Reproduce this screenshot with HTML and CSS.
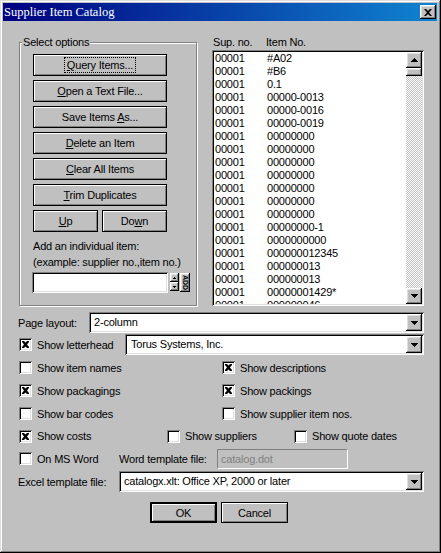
FILE: index.html
```html
<!DOCTYPE html>
<html lang="en">
<head>
    <meta charset="UTF-8" />
    <title>Supplier Item Catalog</title>
    <link rel="stylesheet" href="styles.css">
</head>
<body>

<div class="window">
    <div class="titlebar">
        <span class="title">Supplier Item Catalog</span>
        <button class="close-btn raised">
            <svg width="8" height="7" viewBox="0 0 8 7"><path d="M0 0h2l2 2 2-2h2l-3 3.5 3 3.5h-2l-2-2-2 2h-2l3-3.5z" fill="#000"/></svg>
        </button>
    </div>

    <div class="dialog">
        <div class="top">
            <div class="group">
                <div class="group-label">Select options</div>
                <div class="btn-stack">
                    <button class="btn"><span class="focus"><u>Q</u>uery Items...</span></button>
                    <button class="btn"><u>O</u>pen a Text File...</button>
                    <button class="btn">Save Items <u>A</u>s...</button>
                    <button class="btn"><u>D</u>elete an Item</button>
                    <button class="btn"><u>C</u>lear All Items</button>
                    <button class="btn"><u>T</u>rim Duplicates</button>
                    <div class="btn-pair">
                        <button class="btn"><u>U</u>p</button>
                        <button class="btn">Do<u>w</u>n</button>
                    </div>
                </div>
                <div class="hint">Add an individual item:<br>(example: supplier no.,item no.)</div>
                <div class="add-row">
                    <div class="textbox sunken"></div>
                    <div class="spin">
                        <div class="spin-btn raised"><svg width="3" height="2" viewBox="0 0 3 2"><path d="M1 0h1v1h1v1h-3v-1h1z" fill="#000"/></svg></div>
                        <div class="spin-btn raised"><svg width="3" height="2" viewBox="0 0 3 2"><path d="M0 0h3v1h-1v1h-1v-1h-1z" fill="#000"/></svg></div>
                    </div>
                    <button class="add-btn raised">ADD</button>
                </div>
            </div>

            <div class="list-section">
                <div class="list-head"><span class="c1">Sup. no.</span><span>Item No.</span></div>
                <div class="listbox sunken">
                    <div class="rows" id="rows"></div>
                    <div class="vscroll">
                        <div class="sb-btn raised"><svg width="7" height="4" viewBox="0 0 7 4"><path d="M3 0h1v1h1v1h1v1h1v1h-7v-1h1v-1h1v-1h1z" fill="#000"/></svg></div>
                        <div class="sb-thumb raised"></div>
                        <div class="sb-track"></div>
                        <div class="sb-btn raised"><svg width="7" height="4" viewBox="0 0 7 4"><path d="M0 0h7v1h-1v1h-1v1h-1v1h-1v-1h-1v-1h-1v-1h-1z" fill="#000"/></svg></div>
                    </div>
                </div>
            </div>
        </div>

        <div class="field-row layout-row">
            <span class="label-layout">Page layout:</span>
            <div class="combo sunken">
                <span class="combo-text">2-column</span>
                <div class="combo-btn raised"><svg width="7" height="4" viewBox="0 0 7 4"><path d="M0 0h7v1h-1v1h-1v1h-1v1h-1v-1h-1v-1h-1v-1h-1z" fill="#000"/></svg></div>
            </div>
        </div>

        <div class="field-row letterhead-row">
            <label class="opt opt-letterhead"><span class="check sunken checked"></span>Show letterhead</label>
            <div class="combo sunken">
                <span class="combo-text wide">Torus Systems, Inc.</span>
                <div class="combo-btn raised"><svg width="7" height="4" viewBox="0 0 7 4"><path d="M0 0h7v1h-1v1h-1v1h-1v1h-1v-1h-1v-1h-1v-1h-1z" fill="#000"/></svg></div>
            </div>
        </div>

        <div class="opt-grid">
            <label class="opt"><span class="check sunken"></span>Show item names</label>
            <label class="opt"><span class="check sunken checked"></span>Show descriptions</label>
            <label class="opt"><span class="check sunken checked"></span>Show packagings</label>
            <label class="opt"><span class="check sunken checked"></span>Show packings</label>
            <label class="opt"><span class="check sunken"></span>Show bar codes</label>
            <label class="opt"><span class="check sunken"></span>Show supplier item nos.</label>
        </div>

        <div class="opt-row costs-row">
            <label class="opt"><span class="check sunken checked"></span>Show costs</label>
            <label class="opt"><span class="check sunken"></span>Show suppliers</label>
            <label class="opt"><span class="check sunken"></span>Show quote dates</label>
        </div>

        <div class="opt-row word-row">
            <label class="opt"><span class="check sunken"></span>On MS Word</label>
            <span class="word-label">Word template file:</span>
            <div class="disabled-box">catalog.dot</div>
        </div>

        <div class="field-row excel-row">
            <span class="label-excel">Excel template file:</span>
            <div class="combo sunken">
                <span class="combo-text">catalogx.xlt: Office XP, 2000 or later</span>
                <div class="combo-btn raised"><svg width="7" height="4" viewBox="0 0 7 4"><path d="M0 0h7v1h-1v1h-1v1h-1v1h-1v-1h-1v-1h-1v-1h-1z" fill="#000"/></svg></div>
            </div>
        </div>

        <div class="actions">
            <button class="btn btn-default">OK</button>
            <button class="btn">Cancel</button>
        </div>
    </div>
</div>

<script>
    document.addEventListener("DOMContentLoaded", () => {
        const items = [
            "#A02", "#B6", "0.1", "00000-0013", "00000-0016", "00000-0019",
            "00000000", "00000000", "00000000", "00000000", "00000000", "00000000", "00000000",
            "00000000-1", "0000000000", "000000012345", "000000013", "000000013",
            "00000001429*", "000000046"
        ];
        const rows = document.getElementById("rows");
        items.forEach(item => {
            const row = document.createElement("div");
            row.classList.add("row");
            row.innerHTML = `<span class="c1">00001</span><span>${item}</span>`;
            rows.appendChild(row);
        });

        // tick marks drawn as a small X, like the old dialog
        document.querySelectorAll(".check.checked").forEach(box => {
            box.innerHTML = '<svg width="7" height="7" viewBox="0 0 7 7"><path d="M0 0h2l1.5 1.5 1.5-1.5h2v1l-2 2.5 2 2.5v1h-2l-1.5-1.5-1.5 1.5h-2v-1l2-2.5-2-2.5z" fill="#000"/></svg>';
        });
    });
</script>

</body>
</html>
```

FILE: styles.css
```css
/* General */
* {
    box-sizing: border-box;
}

body {
    margin: 0;
    background: #c0c0c0;
    font-family: 'Liberation Sans', Arial, sans-serif;
    font-size: 11px;
    letter-spacing: -0.2px;
    color: #000;
}

button {
    font-family: inherit;
    font-size: 11px;
    letter-spacing: inherit;
    color: #000;
    padding: 0;
    margin: 0;
}

u {
    text-decoration: underline;
    text-underline-offset: 1px;
}

/* 3D bevels */
.raised {
    background: #c0c0c0;
    border: none;
    box-shadow: inset -1px -1px #000, inset 1px 1px #fff, inset -2px -2px #808080, inset 2px 2px #dfdfdf;
}

.sunken {
    box-shadow: inset 1px 1px #808080, inset -1px -1px #fff, inset 2px 2px #000, inset -2px -2px #dfdfdf;
}

/* Window frame */
.window {
    width: 441px;
    height: 553px;
    padding: 3px 4px 3px 3px;
    background: #c0c0c0;
    box-shadow: inset -1px -1px #000, inset 1px 1px #dfdfdf, inset -2px -2px #808080, inset 2px 2px #fff;
}

.titlebar {
    height: 18px;
    display: flex;
    align-items: center;
    justify-content: space-between;
    padding: 0 1px 0 1px;
    background: linear-gradient(to right, #000080, #1084d0);
    color: #fff;
}

.title {
    font-family: 'Liberation Serif', serif;
    font-size: 12.5px;
    letter-spacing: 0;
    line-height: 18px;
}

.close-btn {
    width: 16px;
    height: 14px;
    display: flex;
    align-items: center;
    justify-content: center;
}

/* Dialog body */
.dialog {
    padding: 15px 13px 0 15px;
}

.top {
    display: flex;
    align-items: flex-start;
    gap: 15px;
}

/* Group box */
.group {
    width: 178px;
    height: 264px;
    margin-top: 6px;
    margin-left: 1px;
    border: 1px solid #808080;
    box-shadow: inset 1px 1px #fff, 1px 1px #fff;
}

.group-label {
    width: fit-content;
    margin: -7px 0 5px 2px;
    padding: 0 1px;
    line-height: 13px;
    background: #c0c0c0;
}

.btn-stack {
    display: flex;
    flex-direction: column;
    gap: 4px;
    padding-left: 13px;
}

.btn {
    width: 134px;
    height: 22px;
    background: #c0c0c0;
    border: 1px solid #000;
    box-shadow: inset 1px 1px #fff, inset -1px -1px #808080;
}

.focus {
    padding: 0 1px;
    outline: 1px dotted #000;
    outline-offset: 1px;
}

.btn-pair {
    display: flex;
    gap: 4px;
}

.btn-pair .btn {
    width: 65px;
}

.hint {
    padding-left: 13px;
    margin-top: 6px;
    line-height: 16px;
}

.add-row {
    display: flex;
    align-items: flex-start;
    margin-top: 2px;
    padding-left: 12px;
}

.textbox {
    width: 136px;
    height: 21px;
    background: #fff;
}

.spin {
    display: flex;
    flex-direction: column;
    margin: 1px 0 0 2px;
}

.spin-btn {
    width: 9px;
    height: 9px;
    display: flex;
    align-items: center;
    justify-content: center;
}

.add-btn {
    width: 10px;
    height: 19px;
    margin: 1px 0 0 1px;
    writing-mode: vertical-rl;
    font-size: 7px;
    font-weight: bold;
    letter-spacing: 0;
    line-height: 10px;
    text-align: center;
}

/* Item list */
.list-section {
    display: flex;
    flex-direction: column;
}

.list-head {
    display: flex;
    line-height: 13px;
    padding-left: 1px;
}

.c1 {
    width: 53px;
}

.listbox {
    width: 212px;
    height: 256px;
    margin-top: 1px;
    padding: 2px;
    display: flex;
    background: #fff;
}

.rows {
    flex: 1;
    overflow: hidden;
}

.row {
    display: flex;
    height: 13px;
    line-height: 13px;
    padding-left: 1px;
    white-space: nowrap;
}

.row .c1 {
    width: 52px;
}

.vscroll {
    width: 16px;
    display: flex;
    flex-direction: column;
}

.sb-btn {
    height: 16px;
    display: flex;
    align-items: center;
    justify-content: center;
}

.sb-thumb {
    height: 8px;
}

.sb-track {
    flex: 1;
    background: repeating-conic-gradient(#c0c0c0 0 25%, #fff 0 50%) 0 0 / 2px 2px;
}

/* Combos and fields */
.field-row {
    display: flex;
    align-items: center;
}

.layout-row {
    margin-top: 6px;
}

.label-layout {
    width: 71px;
}

.combo {
    flex: 1;
    height: 21px;
    padding: 2px;
    display: flex;
    background: #fff;
}

.combo-text {
    flex: 1;
    padding-left: 3px;
    line-height: 17px;
    white-space: nowrap;
}

.combo-text.wide {
    padding-left: 4px;
}

.combo-btn {
    width: 16px;
    display: flex;
    align-items: center;
    justify-content: center;
}

.letterhead-row {
    margin-top: 1px;
}

.opt-letterhead {
    width: 106px;
}

/* Checkbox options */
.opt {
    display: flex;
    align-items: center;
    gap: 5px;
    white-space: nowrap;
    margin-left: 1px;
}

.check {
    width: 13px;
    height: 13px;
    flex: none;
    background: #fff;
    display: flex;
    align-items: center;
    justify-content: center;
}

.opt-grid {
    display: grid;
    grid-template-columns: 203px 1fr;
    grid-auto-rows: 23px;
    align-items: center;
    margin-top: 1px;
}

.opt-row {
    display: flex;
    align-items: center;
}

.costs-row {
    height: 22px;
}

.costs-row .opt:nth-child(1) {
    width: 147px;
}

.costs-row .opt:nth-child(2) {
    width: 126px;
}

.word-row {
    height: 23px;
}

.word-row .opt {
    width: 100px;
}

.word-label {
    width: 98px;
}

.disabled-box {
    width: 131px;
    height: 20px;
    padding-left: 3px;
    line-height: 18px;
    color: #808080;
    background: #c0c0c0;
    border: 1px solid;
    border-color: #808080 #fff #fff #808080;
}

.excel-row {
    margin-top: 1px;
}

.label-excel {
    width: 101px;
}

/* Bottom buttons */
.actions {
    display: flex;
    gap: 4px;
    margin-top: 10px;
    padding-left: 132px;
}

.actions .btn {
    width: 67px;
    height: 21px;
}

.btn-default {
    border-width: 2px;
}
```
